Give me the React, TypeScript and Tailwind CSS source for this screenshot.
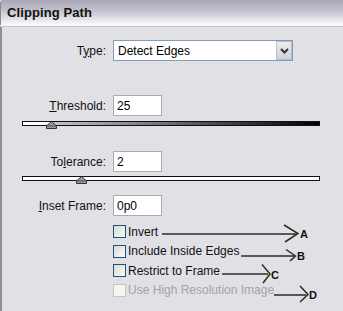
import React from "react";

const FONT = "font-['Liberation_Sans',Arial,sans-serif]";

function Label({ children }: { children: React.ReactNode }) {
  return (
    <div className="w-[105px] text-right text-[12px] text-[#111] leading-none pr-[1px]">
      {children}
    </div>
  );
}

function TextBox({ value }: { value: string }) {
  return (
    <div className="ml-[6px] w-[49px] h-[21px] bg-white border border-[#a5acb5] flex items-center pl-[3px] text-[12px] text-black">
      {value}
    </div>
  );
}

function Thumb({ left }: { left: number }) {
  return (
    <svg
      className="absolute top-[0px]"
      style={{ left }}
      width="11"
      height="8"
      viewBox="0 0 11 8"
    >
      <path d="M5.5 0.5 L10.5 5 L10.5 7.5 L0.5 7.5 L0.5 5 Z" fill="#9a9a9a" stroke="#333" strokeWidth="1" />
      <path d="M0.5 5 L10.5 5" stroke="#555" strokeWidth="1" />
    </svg>
  );
}

function Checkbox({ label, disabled }: { label: string; disabled?: boolean }) {
  return (
    <div className="flex items-center h-[19.5px]">
      <div
        className={
          disabled
            ? "w-[13px] h-[13px] border border-[#c9c7ba] bg-[#f5f5f1]"
            : "w-[13px] h-[13px] border border-[#1c5180] bg-[linear-gradient(135deg,#dcdcd6,#f8f8f6)]"
        }
      />
      <span
        className={
          disabled
            ? "ml-[2px] text-[12px] text-[#a4a4a0] leading-none"
            : "ml-[2px] text-[12px] text-[#111] leading-none"
        }
      >
        {label}
      </span>
    </div>
  );
}

function Arrows() {
  const stroke = "#2b2b2b";
  return (
    <svg className="absolute left-0 top-0 pointer-events-none" width="343" height="311">
      <g stroke={stroke} strokeWidth="1.5" fill="none">
        <path d="M162 234 L297 234" />
        <path d="M284 225 L298 233.5 L285 242" />
        <path d="M241 256 L294 256" />
        <path d="M286 249.5 L295.5 256 L290 261" />
        <path d="M222 274 L268 274" />
        <path d="M262 264.5 L270 274 L263 283" />
        <path d="M274 295 L306 295" />
        <path d="M300 286 L308 294.5 L300 302" />
      </g>
    </svg>
  );
}

export default function App() {
  return (
    <div className={`relative w-[343px] h-[311px] overflow-hidden bg-[#e1e0e4] ${FONT}`}>
      <div className="h-[25px] rounded-tl-[4px] border-l border-[#8a8a96] bg-[linear-gradient(to_bottom,#a8a8b8,#c4c4d0_45%,#e6e6ec_80%,#fbfbfd)] flex items-center pl-[6px]">
        <span className="text-[13px] font-bold text-[#111] tracking-[0.1px]">Clipping Path</span>
      </div>
      <div className="h-[2px] bg-[#f4f4f6] border-b border-[#c8c7cd]" />

      <div className="h-[284px] border-l-2 border-[#8e8d96] flex flex-col">
        <div className="flex items-center mt-[13px] h-[21px]">
          <Label>
            T<u>y</u>pe:
          </Label>
          <div className="ml-[6px] w-[180px] h-[21px] bg-white border border-[#7f9db9] flex items-center">
            <span className="pl-[4px] text-[12px] text-black flex-1">Detect Edges</span>
            <div className="w-[16px] h-[19px] mr-[0px] border border-[#b8bcc8] bg-[linear-gradient(to_bottom,#eeeef2,#cfcfd8)] flex items-center justify-center">
              <svg width="9" height="6" viewBox="0 0 9 6">
                <path d="M1 1 L4.5 4.5 L8 1" stroke="#333" strokeWidth="2" fill="none" />
              </svg>
            </div>
          </div>
        </div>

        <div className="flex items-center mt-[34px] h-[21px]">
          <Label>
            <u>T</u>hreshold:
          </Label>
          <TextBox value="25" />
        </div>

        <div className="relative ml-[20px] mt-[5px] w-[298px] h-[8px]">
          <div className="h-[5px] border border-[#111] bg-[linear-gradient(to_right,#fff_0%,#fff_9%,#c4c4c4_10%,#000_100%)]" />
          <Thumb left={24} />
        </div>

        <div className="flex items-center mt-[22px] h-[21px]">
          <Label>
            To<u>l</u>erance:
          </Label>
          <TextBox value="2" />
        </div>

        <div className="relative ml-[20px] mt-[4px] w-[298px] h-[8px]">
          <div className="h-[5px] border border-[#111] bg-white" />
          <Thumb left={54} />
        </div>

        <div className="flex items-center mt-[11px] h-[21px]">
          <Label>
            <u>I</u>nset Frame:
          </Label>
          <TextBox value="0p0" />
        </div>

        <div className="flex flex-col ml-[111px] mt-[6px]">
          <Checkbox label="Invert" />
          <Checkbox label="Include Inside Edges" />
          <Checkbox label="Restrict to Frame" />
          <Checkbox label="Use High Resolution Image" disabled />
        </div>
      </div>

      <Arrows />
      <span className="absolute left-[300px] top-[229px] text-[11px] font-bold text-[#111] leading-none">A</span>
      <span className="absolute left-[297px] top-[251px] text-[11px] font-bold text-[#111] leading-none">B</span>
      <span className="absolute left-[271px] top-[270px] text-[11px] font-bold text-[#111] leading-none">C</span>
      <span className="absolute left-[309px] top-[290px] text-[11px] font-bold text-[#111] leading-none">D</span>
    </div>
  );
}
